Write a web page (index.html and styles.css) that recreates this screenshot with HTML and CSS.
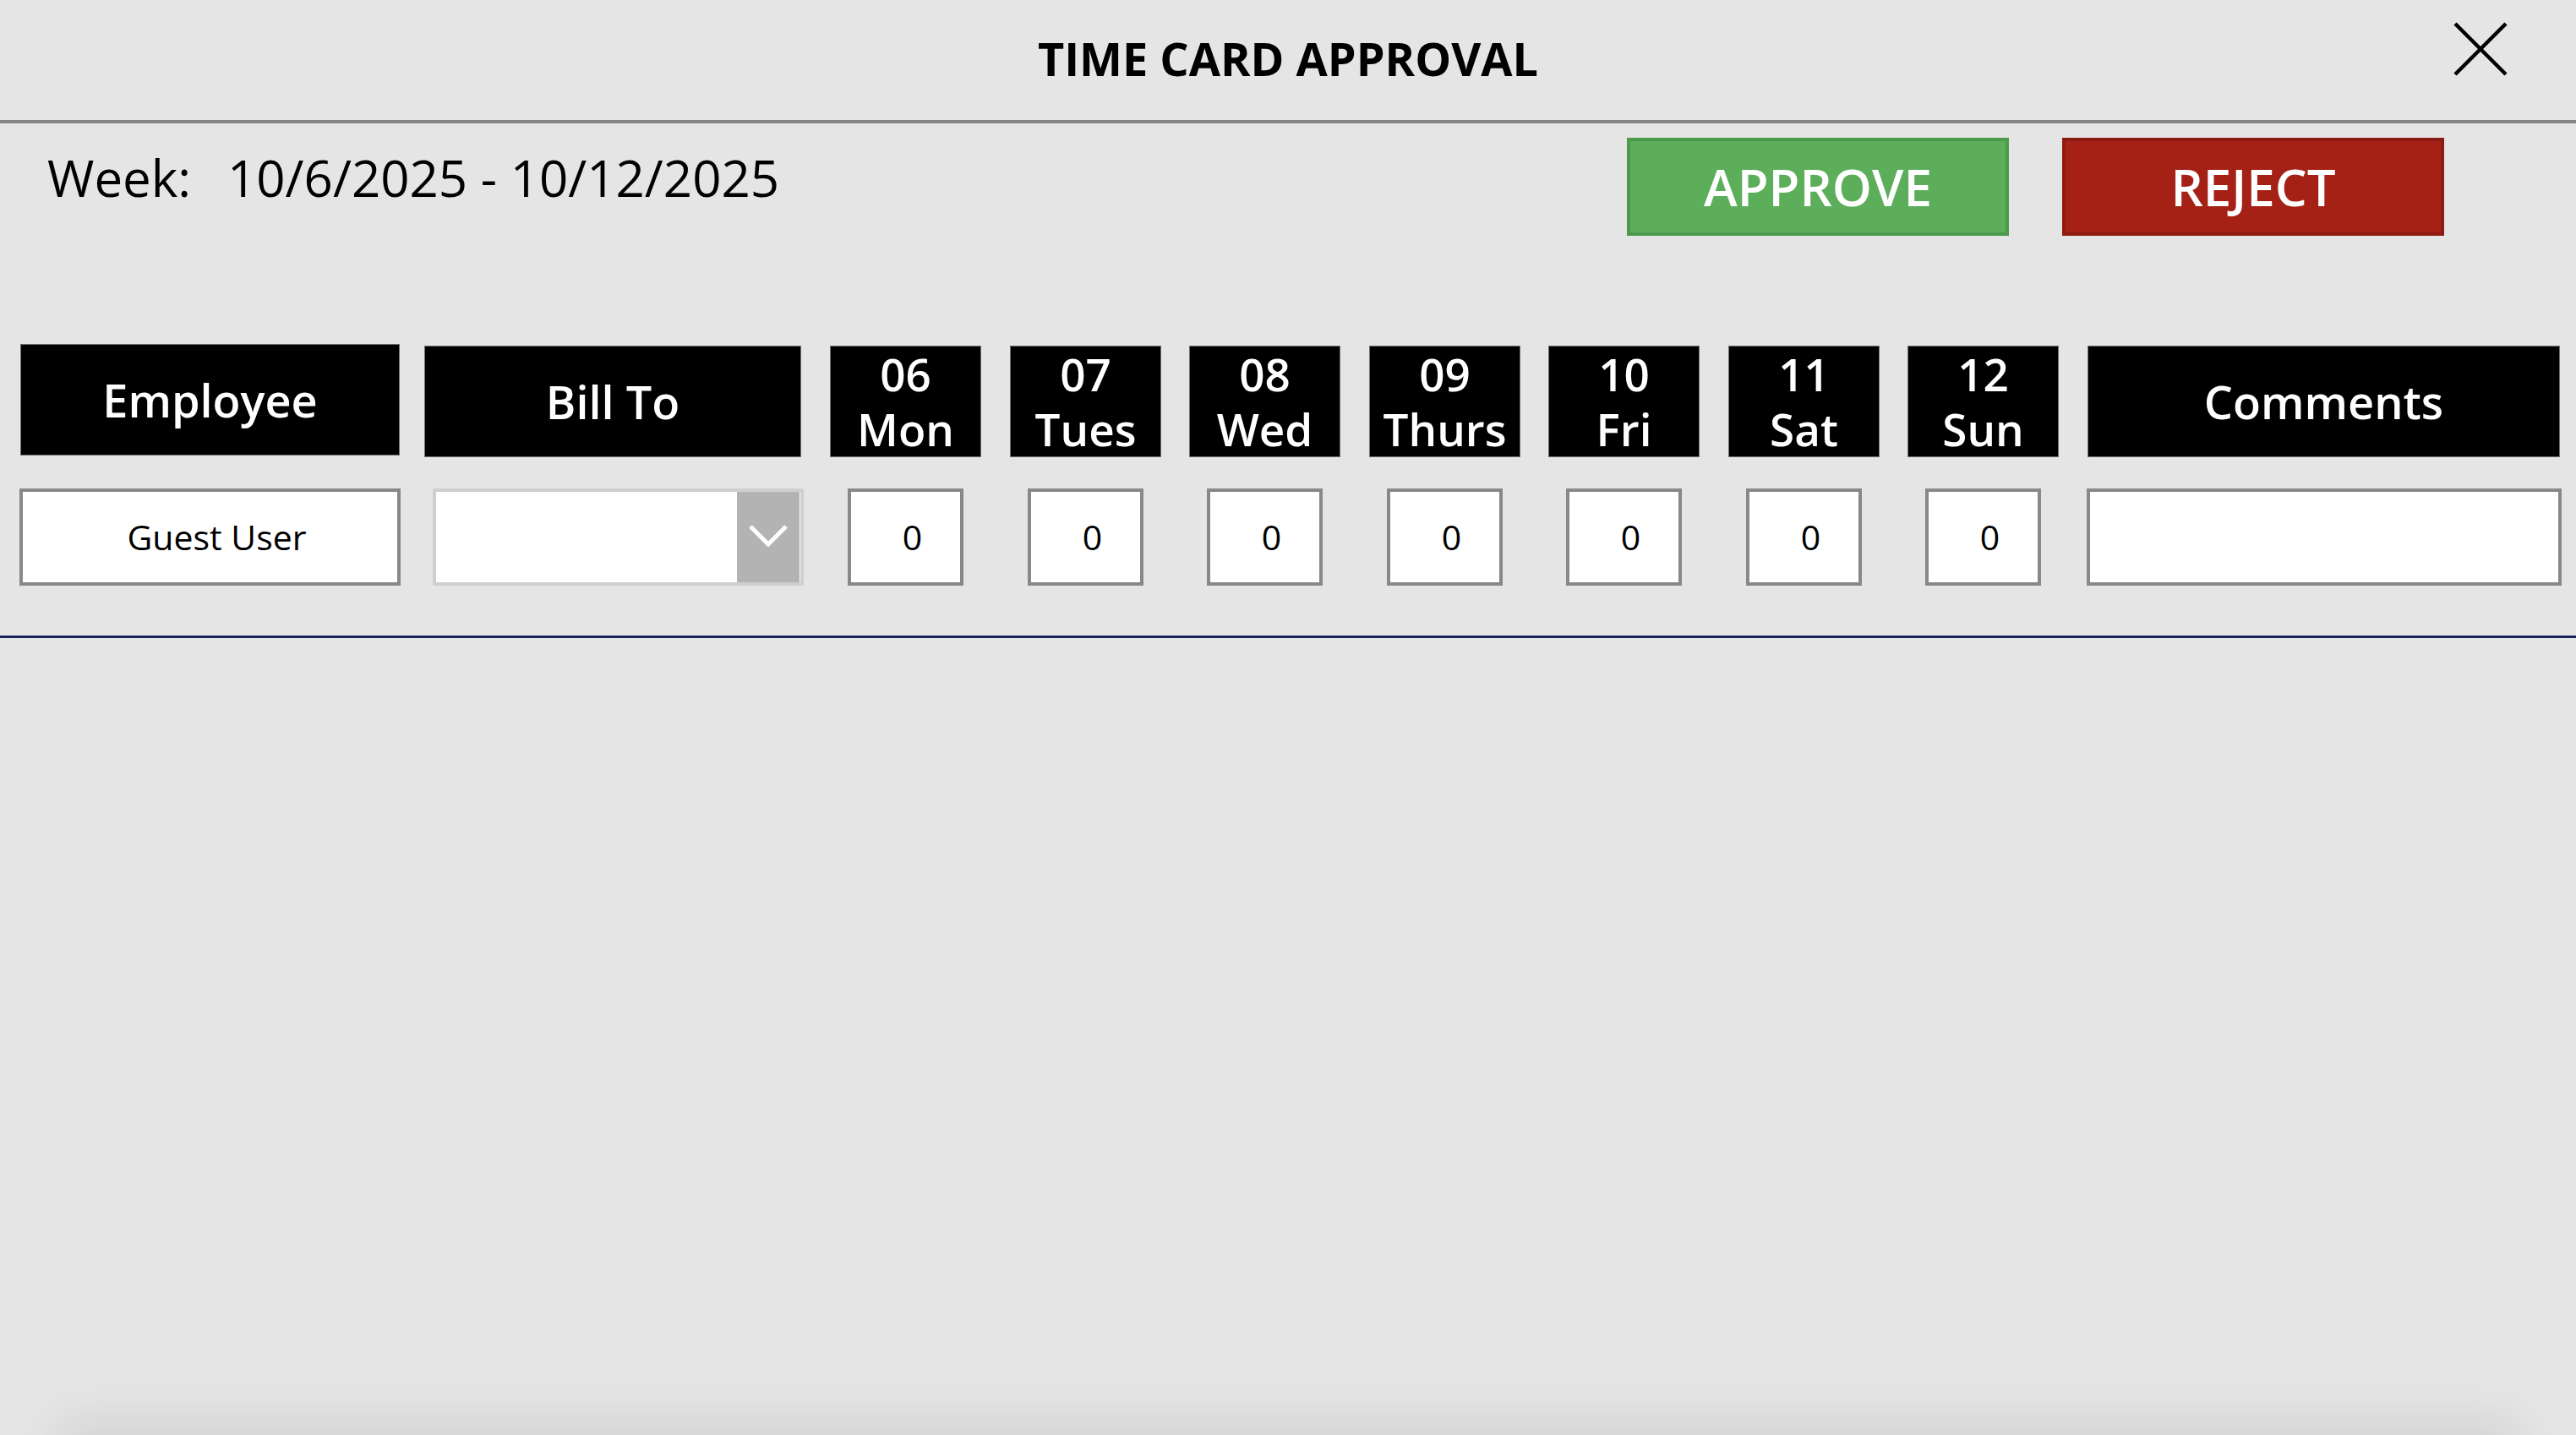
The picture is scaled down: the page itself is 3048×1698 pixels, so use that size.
FILE: index.html
```html
<!DOCTYPE html>
<html>
<head>
<meta charset="utf-8">
<title>Time Card Approval</title>
<link rel="stylesheet" href="styles.css">
</head>
<body>
<div class="app">
  <header class="topbar">
    <div class="topbar-spacer"></div>
    <h1 class="title">TIME CARD APPROVAL</h1>
    <button class="close" aria-label="Close">
      <svg width="64" height="64" viewBox="0 0 64 64"><path d="M2 2 L62 62 M62 2 L2 62" stroke="#000" stroke-width="4.5" fill="none"/></svg>
    </button>
  </header>

  <section class="toolbar">
    <div class="week"><span class="week-label">Week:</span><span class="week-range">10/6/2025 - 10/12/2025</span></div>
    <div class="actions">
      <button class="btn approve">APPROVE</button>
      <button class="btn reject">REJECT</button>
    </div>
  </section>

  <section class="sheet">
    <div class="cell"><div class="head head-employee">Employee</div></div>
    <div class="cell"><div class="head head-bill">Bill To</div></div>
    <div class="cell"><div class="head head-day"><span class="line">06</span><span class="line">Mon</span></div></div>
    <div class="cell"><div class="head head-day"><span class="line">07</span><span class="line">Tues</span></div></div>
    <div class="cell"><div class="head head-day"><span class="line">08</span><span class="line">Wed</span></div></div>
    <div class="cell"><div class="head head-day"><span class="line">09</span><span class="line">Thurs</span></div></div>
    <div class="cell"><div class="head head-day"><span class="line">10</span><span class="line">Fri</span></div></div>
    <div class="cell"><div class="head head-day"><span class="line">11</span><span class="line">Sat</span></div></div>
    <div class="cell"><div class="head head-day"><span class="line">12</span><span class="line">Sun</span></div></div>
    <div class="cell"><div class="head head-comments">Comments</div></div>

    <div class="cell"><div class="field field-employee">Guest User</div></div>
    <div class="cell">
      <div class="dropdown">
        <div class="dropdown-value"></div>
        <div class="dropdown-btn"><svg width="46" height="26" viewBox="0 0 46 26"><path d="M2 2 L23 23 L44 2" stroke="#fff" stroke-width="5" fill="none"/></svg></div>
      </div>
    </div>
    <div class="cell"><div class="field field-day">0</div></div>
    <div class="cell"><div class="field field-day">0</div></div>
    <div class="cell"><div class="field field-day">0</div></div>
    <div class="cell"><div class="field field-day">0</div></div>
    <div class="cell"><div class="field field-day">0</div></div>
    <div class="cell"><div class="field field-day">0</div></div>
    <div class="cell"><div class="field field-day">0</div></div>
    <div class="cell"><div class="field field-comments"></div></div>
  </section>

  <div class="divider"></div>
  <div class="shade"></div>
</div>
</body>
</html>
```

FILE: styles.css
```css
* { box-sizing: border-box; }
html, body { margin: 0; padding: 0; }
body {
  background: #e5e5e5;
  font-family: "Open Sans", "Noto Sans", sans-serif;
  color: #000;
}
.app {
  position: relative;
  min-height: 1698px;
  overflow: hidden;
}
.topbar {
  display: grid;
  grid-template-columns: 1fr auto 1fr;
  align-items: center;
  height: 146px;
  border-bottom: 4px solid #858585;
}
.title {
  margin: 0;
  font-size: 54px;
  font-weight: 700;
  line-height: 1;
  margin-top: -4px;
}
.close {
  justify-self: end;
  margin-right: 81px;
  margin-top: -26px;
  width: 64px;
  height: 64px;
  padding: 0;
  border: 0;
  background: none;
  display: block;
}
.close svg { display: block; }

.toolbar {
  display: flex;
  align-items: flex-start;
  padding: 17px 156px 0 56px;
}
.week {
  margin-top: 17px;
  font-size: 60px;
  line-height: 1;
  font-weight: 400;
  display: flex;
}
.week-label { width: 213px; }
.actions {
  margin-left: auto;
  display: flex;
  gap: 63px;
}
.btn {
  width: 452px;
  height: 116px;
  font-family: "Open Sans", sans-serif;
  font-size: 60px;
  font-weight: 600;
  line-height: 1;
  color: #fff;
  padding: 0;
  display: flex;
  align-items: center;
  justify-content: center;
}
.approve { background: #5cae5a; border: 4px solid #4d9a4b; }
.reject { background: #a52116; border: 4px solid #8e1b12; }

.sheet {
  margin-top: 130px;
  padding-left: 23px;
  display: grid;
  grid-template-columns: 479px 480px 213px 212px 213px 212px 213px 212px 212px 562px;
  grid-template-rows: 132px 115px;
  row-gap: 37px;
}
.cell { display: flex; }
.head {
  background: #000;
  border: 1px solid #707070;
  color: #fff;
  font-weight: 600;
  font-size: 54px;
  line-height: 1;
  text-align: center;
  display: flex;
  flex-direction: column;
  align-items: center;
  justify-content: center;
  height: 132px;
}
.head-employee { width: 449px; margin-left: 1px; margin-top: -2px; }
.head-bill { width: 446px; }
.head-day { width: 179px; font-size: 53px; gap: 12px; }
.head-day .line { display: block; line-height: 53px; }
.head-comments { width: 559px; margin-left: 1px; }

.field {
  height: 115px;
  background: #fff;
  border: 4px solid #888;
  font-size: 41px;
  line-height: 1;
  display: flex;
  align-items: center;
  justify-content: center;
  padding-left: 16px;
}
.field-employee { width: 451px; }
.field-day { width: 137px; margin-left: 21px; }
.field-comments { width: 562px; }

.dropdown {
  margin-left: 10px;
  width: 439px;
  height: 115px;
  border: 4px solid #cfcfcf;
  background: #fff;
  display: flex;
}
.dropdown-value { flex: 1; }
.dropdown-btn {
  width: 74px;
  background: #b3b3b3;
  display: flex;
  align-items: center;
  justify-content: center;
  margin-right: 1px;
}
.dropdown-btn svg { display: block; margin-top: -4px; }

.divider {
  margin-top: 59px;
  height: 3px;
  background: #17215c;
}
.shade {
  position: absolute;
  left: 80px;
  right: 80px;
  bottom: -30px;
  height: 30px;
  box-shadow: 0 0 60px 10px rgba(0, 0, 0, 0.11);
}
```
